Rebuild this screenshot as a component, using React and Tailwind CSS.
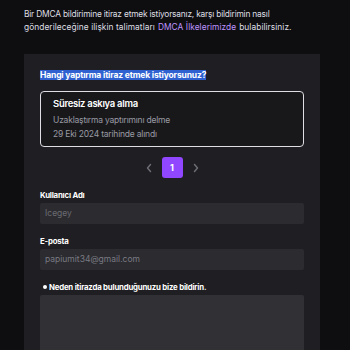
import React from "react";

const ChevronLeft = () => (
  <svg width="8" height="10" viewBox="0 0 8 10" fill="none">
    <path d="M5.5 1.5L2.5 5l3 3.5" stroke="#6e6e78" strokeWidth="1.4" strokeLinecap="round" strokeLinejoin="round" />
  </svg>
);

const ChevronRight = () => (
  <svg width="8" height="10" viewBox="0 0 8 10" fill="none">
    <path d="M2.5 1.5L5.5 5l-3 3.5" stroke="#6e6e78" strokeWidth="1.4" strokeLinecap="round" strokeLinejoin="round" />
  </svg>
);

const App = () => {
  return (
    <div
      className="w-[350px] h-[350px] overflow-hidden bg-[#0e0e10] text-[#dedee3]"
      style={{ fontFamily: "Inter, 'Noto Sans', sans-serif" }}
    >
      {/* Intro text */}
      <div className="pl-6 pt-[8px] text-[8.4px] leading-[13px] text-[#dedee3]">
        <p className="tracking-[-0.2px] whitespace-nowrap">
          Bir DMCA bildirimine itiraz etmek istiyorsanız, karşı bildirimin nasıl
        </p>
        <p className="flex gap-[3px] tracking-[0.05px] whitespace-nowrap">
          <span>gönderileceğine ilişkin talimatları</span>
          <span className="text-[#bf94ff]">DMCA İlkelerimizde</span>
          <span>bulabilirsiniz.</span>
        </p>
      </div>

      {/* Form card */}
      <div className="ml-6 mt-[20px] w-[296px] h-[320px] bg-[#1f1f23] px-4 pt-[15px]">
        <h2 className="text-[8.5px] font-bold leading-[12px] tracking-[-0.15px] text-white">
          <span className="bg-[#2f62d0]">Hangi yaptırma itiraz etmek istiyorsunuz?</span>
        </h2>

        <div className="mt-[10px] h-[56px] rounded-[4px] border border-[#dedee3] bg-[#18181b] px-3 pt-[5px]">
          <div className="text-[9.5px] font-semibold leading-[14px] tracking-[-0.3px] text-white">Süresiz askıya alma</div>
          <div className="mt-[2px] text-[8.5px] leading-[14px] tracking-[-0.2px] text-[#9a9aa3]">Uzaklaştırma yaptırımını delme</div>
          <div className="text-[8.5px] leading-[14px] tracking-[-0.2px] text-[#9a9aa3]">29 Eki 2024 tarihinde alındı</div>
        </div>

        {/* Pagination */}
        <div className="mt-[10px] flex items-center justify-center gap-[9px]">
          <ChevronLeft />
          <div className="flex h-[21px] w-[21px] items-center justify-center rounded-[3px] bg-[#9147ff] text-[9px] font-bold text-white">
            1
          </div>
          <ChevronRight />
        </div>

        {/* Username */}
        <label className="mt-[12px] block text-[7.8px] font-bold leading-[10px] tracking-[-0.2px] text-white">Kullanıcı Adı</label>
        <div className="mt-[3px] flex h-[21px] items-center rounded-[2px] bg-[#2b2b30] px-[5px] text-[8.5px] text-[#6b6b72]">
          Icegey
        </div>

        {/* Email */}
        <label className="mt-[12px] block text-[7.8px] font-bold leading-[10px] tracking-[-0.2px] text-white">E-posta</label>
        <div className="mt-[3px] flex h-[21px] items-center rounded-[2px] bg-[#2b2b30] px-[5px] text-[8.5px] text-[#7a7a82]">
          papiumit34@gmail.com
        </div>

        {/* Reason */}
        <label className="mt-[12px] flex items-center gap-[2px] text-[7.8px] font-bold leading-[10px] tracking-[-0.2px] text-white">
          <span className="ml-[3px] h-[4px] w-[4px] rounded-full bg-white" />
          Neden itirazda bulunduğunuzu bize bildirin.
        </label>
        <div className="mt-[3px] h-[80px] rounded-[2px] bg-[#303035]" />
      </div>
    </div>
  );
};

export default App;
